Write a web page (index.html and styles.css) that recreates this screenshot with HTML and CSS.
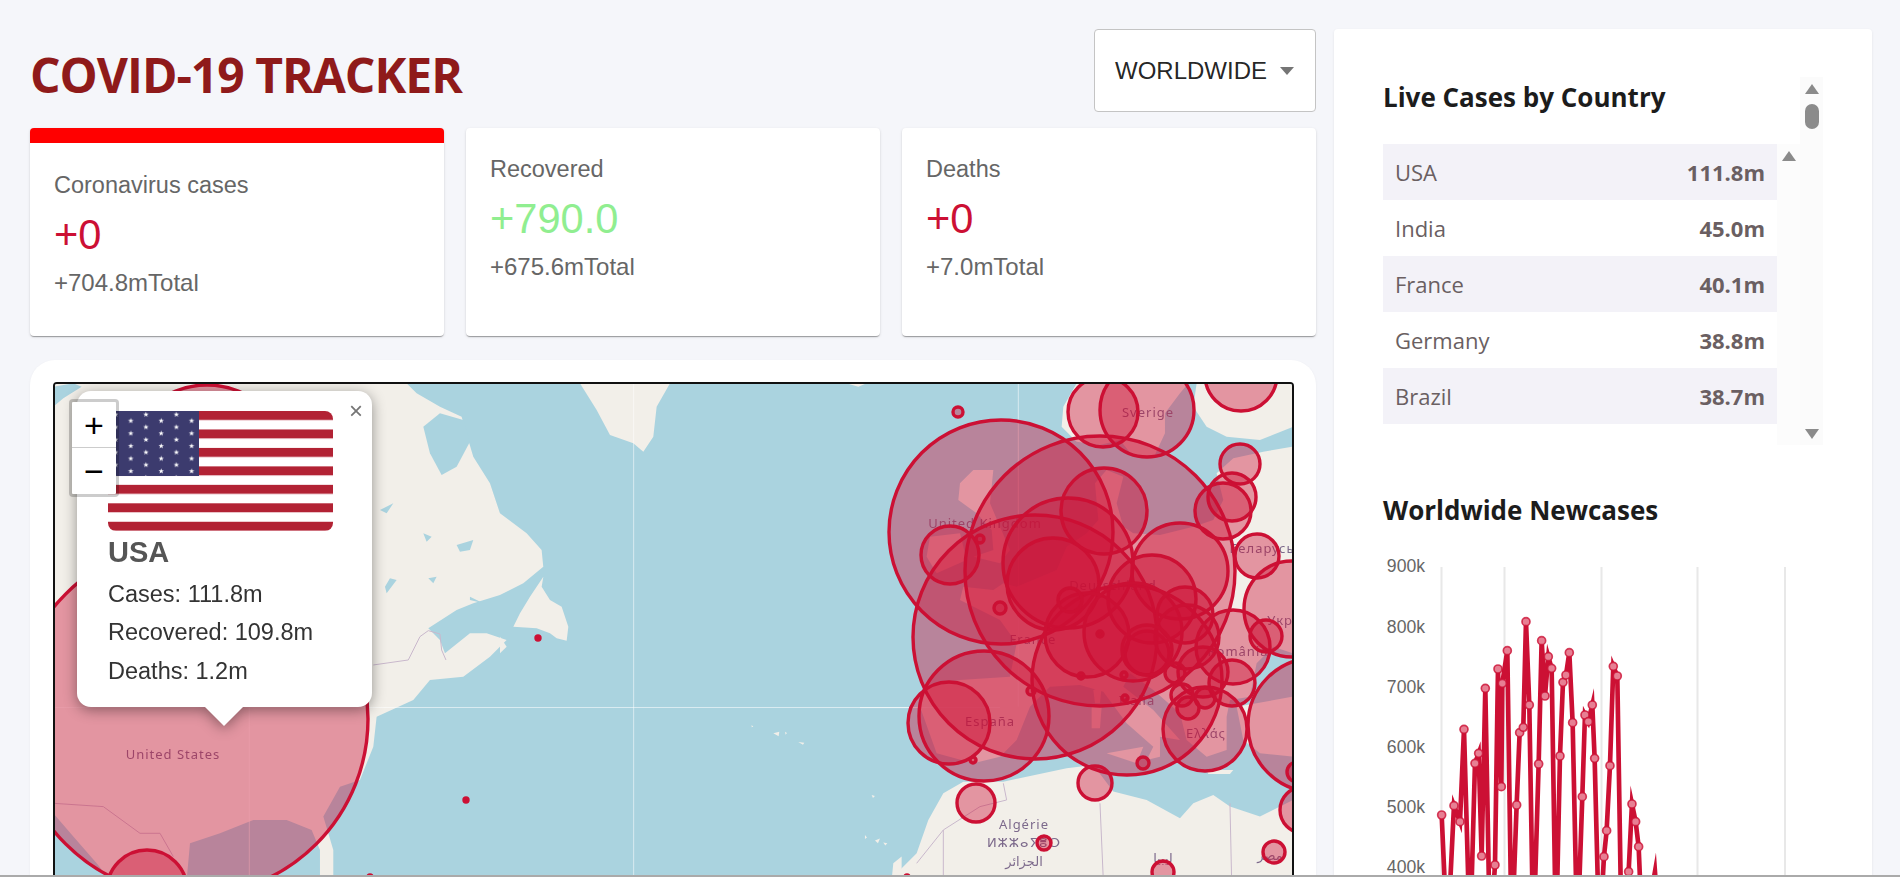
FILE: index.html
```html
<!DOCTYPE html>
<html lang="en">

<head>
    <meta charset="UTF-8" />
    <meta name="viewport" content="width=device-width, initial-scale=1.0" />
    <title>COVID-19 Tracker</title>
    <link rel="stylesheet" href="styles.css">
</head>

<body>
    <div class="app">
        <div class="app-left">
            <div class="app-header">
                <h1 class="app-title">COVID-19 TRACKER</h1>
                <div class="select">
                    <span>WORLDWIDE</span>
                    <i class="select-arrow"></i>
                </div>
            </div>

            <div class="stats">
                <div class="card card-active">
                    <div class="card-label">Coronavirus cases</div>
                    <div class="card-value">+0</div>
                    <div class="card-total">+704.8mTotal</div>
                </div>
                <div class="card">
                    <div class="card-label">Recovered</div>
                    <div class="card-value card-value-green">+790.0</div>
                    <div class="card-total">+675.6mTotal</div>
                </div>
                <div class="card">
                    <div class="card-label">Deaths</div>
                    <div class="card-value">+0</div>
                    <div class="card-total">+7.0mTotal</div>
                </div>
            </div>

            <div class="map-card">
                <div class="map">
                    <svg class="map-tiles" width="1237" height="510" viewBox="55 384 1237 510">
                        <rect class="sea" x="55" y="384" width="1237" height="510" />

                        <!-- north america -->
                        <g transform="translate(40 370) scale(.3333)">
                            <path class="land" d="M0,30 L1090,30 L1130,70 L1200,110 L1265,140 L1285,210 L1300,260 L1350,340 L1380,430 L1460,490 L1505,540 L1510,590 L1450,640 L1380,675 L1300,700 L1250,720 L1165,775 L1200,810 L1215,850 L1290,790 L1340,790 L1400,810 L1350,860 L1270,920 L1170,930 L1120,990 L1010,1040 L1000,1130 L960,1230 L900,1250 L850,1340 L880,1440 L880,1530 L840,1530 L840,1440 L815,1380 L740,1350 L640,1350 L540,1390 L450,1420 L440,1530 L0,1530 Z" />
                            <path class="sea" d="M1150,170 L1170,250 L1205,315 L1250,290 L1290,215 L1270,150 L1200,130 Z" />
                            <path class="sea" d="M40,1330 L100,1400 L170,1480 L210,1530 L40,1530 Z" />
                            <path class="sea" d="M40,110 L70,85 L125,50 L100,40 L40,50 Z" />
                            <path class="sea" d="M1040,670 L1070,630 L1050,625 L1035,650 Z M1165,625 L1190,620 L1180,640 Z M1290,690 L1330,700 L1290,680 Z M1250,525 L1300,510 L1290,540 L1260,545 Z M1150,490 L1175,500 L1160,515 Z M1020,420 L1060,400 L1040,430 Z" />
                            <path class="border" d="M1000,885 L1105,870 L1140,800 L1165,782 L1200,792 L1205,840 L1218,870" />
                            <path class="border" d="M40,1300 L190,1310 L300,1390 L360,1390 L400,1460" />
                            <path class="tile-seam" d="M628,1010 L628,1530" />
                        </g>

                        <!-- greenland, newfoundland, the islands -->
                        <g transform="translate(500 370) scale(.3333)">
                            <path class="land" d="M240,40 L510,40 L470,110 L460,200 L430,245 L400,220 L330,195 L290,120 Z" />
                            <path class="land" d="M130,620 L90,680 L60,730 L40,770 L110,775 L150,790 L170,805 L200,812 L205,770 L185,710 L150,690 L125,650 Z" />
                            <path class="land" d="M0,800 L20,830 L0,850 Z" />
                            <path class="land" d="M1040,40 L1100,40 L1075,50 Z" />
                            <path class="land" d="M755,1065 l5,5 l-5,2 Z M820,1090 l18,-5 l-2,14 Z M855,1085 l6,4 l-4,5 Z M895,1116 l18,2 l-4,6 Z M1115,1275 l10,3 l-6,6 Z M1125,1412 l15,-6 l-6,14 Z M1150,1418 l12,2 l-6,7 Z M1095,1395 l6,8 l-6,4 Z M1175,1530 l5,-50 l25,-20 l0,70 Z" />
                            <path class="tile-seam" d="M401,40 L401,1530" />
                        </g>

                        <!-- europe and north africa -->
                        <g transform="translate(860 370) scale(.3333)">
                            <path class="land" d="M90,1530 L170,1450 L205,1350 L250,1270 L310,1235 L430,1235 L620,1195 L700,1185 L760,1265 L860,1290 L960,1345 L1000,1300 L1060,1275 L1110,1310 L1200,1340 L1300,1290 L1300,1530 Z" />
                            <path class="land" d="M1300,230 L1210,245 L1120,265 L1070,310 L1090,390 L1060,450 L1000,470 L900,495 L820,490 L790,470 L770,400 L790,320 L740,300 L705,340 L715,450 L680,490 L620,530 L590,600 L470,650 L430,640 L400,660 L310,650 L300,690 L420,750 L470,820 L450,920 L300,930 L190,950 L180,1010 L230,1150 L340,1180 L420,1160 L470,1110 L510,1010 L570,950 L660,945 L730,965 L800,1060 L880,1130 L860,1170 L900,1160 L900,1100 L960,1110 L880,1020 L790,950 L810,910 L880,960 L960,1030 L980,1110 L1040,1160 L1100,1140 L1100,1040 L1110,990 L1170,980 L1190,880 L1240,830 L1300,850 Z" />
                            <path class="land" d="M1130,1010 L1300,980 L1300,1160 L1200,1150 L1150,1110 Z" />
                            <path class="land" d="M650,40 L610,110 L605,170 L650,215 L720,225 L780,210 L820,260 L880,265 L915,190 L915,130 L960,70 L985,40 Z" />
                            <path class="land" d="M1010,40 L1300,40 L1300,170 L1200,210 L1100,200 L1040,170 L1000,110 Z" />
                            <path class="land" d="M340,300 L300,340 L295,390 L350,430 L395,480 L400,540 L340,560 L420,580 L450,540 L420,470 L390,400 L400,300 Z" />
                            <path class="land" d="M210,500 L300,490 L320,570 L230,610 L200,560 Z" />
                            <path class="land" d="M695,1010 L725,1010 L720,1075 L695,1075 Z M740,1150 L850,1130 L830,1180 Z M1040,1200 L1120,1200 L1110,1212 L1045,1212 Z M700,960 L725,950 L720,1000 L705,1000 Z" />
                            <path class="border" d="M1110,1300 L1115,1530 M720,1300 L730,1530 M250,1380 L250,1530 M430,1240 L440,1290 L360,1310 L250,1380 L170,1480" />
                            <path class="tile-seam" d="M475,40 L475,1010 M0,1013 L200,1013" />
                        </g>
                        <path class="tile-seam" d="M55,707.5 L1000,707.5" />

                        <!-- place names, drawn under the bubbles -->
                        <g class="place-names">
                            <text x="173" y="759">United States</text>
                            <text x="1148" y="417">Sverige</text>
                            <text x="985" y="528">United Kingdom</text>
                            <text x="1033" y="644">France</text>
                            <text x="1113" y="590">Deutschland</text>
                            <text x="990" y="726">España</text>
                            <text x="1137" y="705">Italia</text>
                            <text x="1206" y="738">Ελλάς</text>
                            <text x="1238" y="656">România</text>
                            <text x="1262" y="553">Беларусь</text>
                            <text x="1295" y="625">Україна</text>
                            <text x="1024" y="829">Algérie</text>
                            <text x="1024" y="847">ⵍⵣⵣⴰⵢⴻⵔ</text>
                            <text x="1024" y="866">الجزائر</text>
                            <text x="1163" y="863">ليبيا</text>
                            <text x="1270" y="860">مصر</text>
                        </g>

                        <g class="bubbles">
                            <circle cx="207" cy="470" r="85" />
                            <circle cx="191" cy="719" r="177" />
                            <circle cx="147" cy="890" r="40" />
                            <circle class="dot" cx="466" cy="800" r="2" />
                            <circle class="dot" cx="538" cy="638" r="2" />
                            <circle class="dot" cx="370" cy="877" r="2" />
                            <circle cx="1001" cy="532" r="112" />
                            <circle cx="1100" cy="571" r="135" />
                            <circle cx="1035" cy="637" r="122" />
                            <circle cx="1127" cy="680" r="95" />
                            <circle cx="984" cy="716" r="65" />
                            <circle cx="949" cy="723" r="41" />
                            <circle cx="950" cy="555" r="29" />
                            <circle cx="1068" cy="563" r="65" />
                            <circle cx="1053" cy="584" r="46" />
                            <circle cx="1104" cy="511" r="43" />
                            <circle cx="1180" cy="571" r="48" />
                            <circle cx="1152" cy="599" r="44" />
                            <circle cx="1087" cy="635" r="42" />
                            <circle cx="1133" cy="632" r="49" />
                            <circle cx="1185" cy="615" r="28" />
                            <circle cx="1187" cy="637" r="32" />
                            <circle cx="1147" cy="653" r="22" />
                            <circle cx="1147" cy="650" r="25" />
                            <circle cx="1233" cy="647" r="37" />
                            <circle cx="1205" cy="729" r="42" />
                            <circle cx="1232" cy="683" r="23" />
                            <circle cx="1203" cy="672" r="25" />
                            <circle cx="1188" cy="708" r="11" />
                            <circle cx="1205" cy="698" r="10" />
                            <circle cx="1182" cy="695" r="11" />
                            <circle cx="1175" cy="673" r="10" />
                            <circle cx="1147" cy="410" r="47" />
                            <circle cx="1103" cy="412" r="35" />
                            <circle cx="1241" cy="375" r="36" />
                            <circle cx="1240" cy="464" r="20" />
                            <circle cx="1232" cy="497" r="24" />
                            <circle cx="1223" cy="511" r="28" />
                            <circle cx="1257" cy="556" r="22" />
                            <circle cx="1292" cy="609" r="48" />
                            <circle cx="1266" cy="636" r="16" />
                            <circle cx="1315" cy="725" r="67" />
                            <circle cx="1297" cy="772" r="10" />
                            <circle cx="1303" cy="810" r="23" />
                            <circle cx="958" cy="412" r="5" />
                            <circle cx="1000" cy="608" r="6" />
                            <circle cx="980" cy="539" r="4" />
                            <circle cx="1031" cy="691" r="4" />
                            <circle cx="973" cy="760" r="3" />
                            <circle class="dot" cx="1100" cy="634" r="3" />
                            <circle cx="1081" cy="676" r="3" />
                            <circle cx="1124" cy="675" r="3" />
                            <circle cx="1125" cy="698" r="3" />
                            <circle cx="1070" cy="600" r="12" />
                            <circle cx="1143" cy="763" r="6" />
                            <circle cx="1095" cy="783" r="17" />
                            <circle cx="976" cy="803" r="19" />
                            <circle cx="1044" cy="843" r="7" />
                            <circle cx="1163" cy="872" r="11" />
                            <circle cx="1274" cy="852" r="11" />
                            <circle class="dot" cx="907" cy="877" r="2" />
                        </g>
                    </svg>

                    <div class="zoom-control">
                        <div class="zoom-btn">+</div>
                        <div class="zoom-btn">−</div>
                    </div>

                    <div class="popup">
                        <span class="popup-close">×</span>
                        <svg class="popup-flag" width="225" height="120" viewBox="0 0 225 120">
                            <defs>
                                <polygon id="star" points="0,-2.8 .7,-.9 2.7,-.9 1.1,.3 1.7,2.3 0,1.1 -1.7,2.3 -1.1,.3 -2.7,-.9 -.7,-.9" />
                                <pattern id="stars" x="0" y="0" width="30.4" height="12.6" patternUnits="userSpaceOnUse">
                                    <use href="#star" x="7.6" y="3.6" fill="#fff" />
                                    <use href="#star" x="22.8" y="9.9" fill="#fff" />
                                </pattern>
                                <pattern id="stripes" x="0" y="0" width="225" height="18.46" patternUnits="userSpaceOnUse">
                                    <rect width="225" height="9.23" fill="#b22234" />
                                    <rect y="9.23" width="225" height="9.23" fill="#fff" />
                                </pattern>
                            </defs>
                            <rect width="225" height="120" fill="url(#stripes)" />
                            <rect width="91" height="65" fill="#3c3b6e" />
                            <rect width="91" height="65" fill="url(#stars)" />
                        </svg>
                        <div class="popup-name">USA</div>
                        <div class="popup-line">Cases: 111.8m</div>
                        <div class="popup-line">Recovered: 109.8m</div>
                        <div class="popup-line">Deaths: 1.2m</div>
                    </div>
                </div>
            </div>
        </div>

        <div class="app-right">
            <div class="live">
                <div class="live-main">
                    <h3 class="side-title live-title">Live Cases by Country</h3>
                    <div class="live-list">
                        <table class="table">
                            <tr><td>USA</td><td><strong>111.8m</strong></td></tr>
                            <tr><td>India</td><td><strong>45.0m</strong></td></tr>
                            <tr><td>France</td><td><strong>40.1m</strong></td></tr>
                            <tr><td>Germany</td><td><strong>38.8m</strong></td></tr>
                            <tr><td>Brazil</td><td><strong>38.7m</strong></td></tr>
                        </table>
                        <div class="scrollbar scrollbar-inner">
                            <i class="arrow-up"></i>
                        </div>
                    </div>
                </div>
                <div class="scrollbar">
                    <i class="arrow-up"></i>
                    <i class="scroll-thumb"></i>
                    <i class="arrow-down"></i>
                </div>
            </div>

            <h3 class="side-title chart-title">Worldwide Newcases</h3>
            <svg class="chart" width="440" height="340" viewBox="1383 560 440 340">
                <g class="chart-grid">
                    <line x1="1441.5" y1="572" x2="1441.5" y2="900" />
                    <line x1="1504.5" y1="572" x2="1504.5" y2="900" />
                    <line x1="1601.5" y1="572" x2="1601.5" y2="900" />
                    <line x1="1697.5" y1="572" x2="1697.5" y2="900" />
                    <line x1="1785" y1="572" x2="1785" y2="900" />
                </g>
                <g class="chart-ticks">
                    <text x="1425" y="577">900k</text>
                    <text x="1425" y="638">800k</text>
                    <text x="1425" y="698">700k</text>
                    <text x="1425" y="758">600k</text>
                    <text x="1425" y="818">500k</text>
                    <text x="1425" y="878">400k</text>
                </g>
                <g transform="translate(1340 480) scale(.3333)">
                    <polyline class="chart-line" points="305,1020 322,1400 342,992 360,1040 372,763 390,1400 405,865 416,835 425,1143 436,640 450,1400 465,1170 474,582 484,935 487,625 502,527 515,1400 530,990 539,773 550,757 558,440 568,690 580,1400 596,867 605,497 615,663 625,545 635,580 648,1400 660,843 669,622 678,600 688,533 698,743 712,1400 727,965 735,720 745,740 757,690 764,850 778,1400 792,1145 800,1067 810,872 820,574 832,603 845,1400 866,1190 876,987 887,1040 896,1115 908,1400 945,1190 960,1400" />
                    <g class="chart-points">
                        <circle cx="305" cy="1020" r="12" />
                        <circle cx="342" cy="992" r="12" />
                        <circle cx="360" cy="1040" r="12" />
                        <circle cx="372" cy="763" r="12" />
                        <circle cx="405" cy="865" r="12" />
                        <circle cx="416" cy="835" r="12" />
                        <circle cx="425" cy="1143" r="12" />
                        <circle cx="436" cy="640" r="12" />
                        <circle cx="465" cy="1170" r="12" />
                        <circle cx="474" cy="582" r="12" />
                        <circle cx="484" cy="935" r="12" />
                        <circle cx="487" cy="625" r="12" />
                        <circle cx="502" cy="527" r="12" />
                        <circle cx="530" cy="990" r="12" />
                        <circle cx="539" cy="773" r="12" />
                        <circle cx="550" cy="757" r="12" />
                        <circle cx="558" cy="440" r="12" />
                        <circle cx="568" cy="690" r="12" />
                        <circle cx="596" cy="867" r="12" />
                        <circle cx="605" cy="497" r="12" />
                        <circle cx="615" cy="663" r="12" />
                        <circle cx="625" cy="545" r="12" />
                        <circle cx="635" cy="580" r="12" />
                        <circle cx="660" cy="843" r="12" />
                        <circle cx="669" cy="622" r="12" />
                        <circle cx="678" cy="600" r="12" />
                        <circle cx="688" cy="533" r="12" />
                        <circle cx="698" cy="743" r="12" />
                        <circle cx="727" cy="965" r="12" />
                        <circle cx="735" cy="720" r="12" />
                        <circle cx="745" cy="740" r="12" />
                        <circle cx="757" cy="690" r="12" />
                        <circle cx="764" cy="850" r="12" />
                        <circle cx="792" cy="1145" r="12" />
                        <circle cx="800" cy="1067" r="12" />
                        <circle cx="810" cy="872" r="12" />
                        <circle cx="820" cy="574" r="12" />
                        <circle cx="832" cy="603" r="12" />
                        <circle cx="866" cy="1190" r="12" />
                        <circle cx="876" cy="987" r="12" />
                        <circle cx="887" cy="1040" r="12" />
                        <circle cx="896" cy="1115" r="12" />
                    </g>
                </g>
            </svg>
        </div>
    </div>
    <div class="window-edge"></div>
</body>

</html>
```

FILE: styles.css
```css
* {
    margin: 0;
    padding: 0;
    box-sizing: border-box;
}

html,
body {
    height: 100%;
    overflow: hidden;
}

body {
    background-color: #f5f6fa;
    font-family: "Liberation Sans", Arial, sans-serif;
}

.app {
    display: flex;
    gap: 18px;
    padding: 29px 28px 0 30px;
}

.app-left {
    width: 1286px;
    flex-shrink: 0;
}

.app-right {
    flex: 1;
    height: 900px;
    padding: 48px 0 0 49px;
    background-color: #fff;
    border-radius: 4px;
    box-shadow: 0 1px 3px rgba(0, 0, 0, 0.08);
}

/* header */
.app-header {
    display: flex;
    justify-content: space-between;
    align-items: center;
    height: 83px;
    margin-bottom: 16px;
}

.app-title {
    font-family: "Open Sans", sans-serif;
    font-size: 48px;
    font-weight: 700;
    letter-spacing: -1px;
    color: #8f1a1a;
    margin-top: 7px;
}

.select {
    display: flex;
    align-items: center;
    justify-content: space-between;
    width: 222px;
    height: 83px;
    padding: 0 21px 0 20px;
    font-size: 24px;
    color: rgba(0, 0, 0, 0.87);
    background-color: #fff;
    border: 1px solid #c4c4c4;
    border-radius: 4px;
}

.select-arrow {
    border-top: 8px solid #757575;
    border-left: 7px solid transparent;
    border-right: 7px solid transparent;
}

/* stat cards */
.stats {
    display: flex;
    gap: 22px;
    margin-bottom: 24px;
}

.card {
    flex: 1;
    height: 208px;
    padding: 27px 24px 0;
    background-color: #fff;
    border-radius: 4px;
    box-shadow: 0 2px 1px -1px rgba(0, 0, 0, 0.2), 0 1px 1px 0 rgba(0, 0, 0, 0.14), 0 1px 3px 0 rgba(0, 0, 0, 0.12);
}

.card-active {
    border-top: 15px solid #f00;
    padding-top: 28px;
}

.card-label {
    font-size: 23.5px;
    line-height: 28px;
    color: #666;
}

.card-value {
    font-size: 41.6px;
    line-height: 49px;
    margin: 11px 0 10px;
    color: #cc1034;
}

.card-value-green {
    color: #90ee90;
}

.card-total {
    font-size: 24px;
    line-height: 28px;
    color: #666;
}

/* map */
.map-card {
    height: 600px;
    padding: 22px 22px 0 23px;
    background-color: #fff;
    border-radius: 25px;
    box-shadow: 0 1px 3px rgba(0, 0, 0, 0.05);
}

.map {
    position: relative;
    height: 530px;
    overflow: hidden;
    border: 2px solid #111;
    border-radius: 4px;
}

.map-tiles {
    display: block;
}

.sea {
    fill: #aad3df;
}

.land {
    fill: #f2efe9;
}

.border {
    fill: none;
    stroke: #c9b8cc;
    stroke-width: 3;
}

.tile-seam {
    fill: none;
    stroke: #fff;
    stroke-opacity: 0.55;
    stroke-width: 3;
}

path.tile-seam[d^="M55"] {
    stroke-width: 1;
}

.place-names {
    font-family: "Noto Sans", "DejaVu Sans", sans-serif;
    font-size: 13px;
    letter-spacing: 1px;
    text-anchor: middle;
    fill: #7d6a8c;
    filter: blur(0.3px);
}

.bubbles circle {
    fill: #cc1034;
    fill-opacity: 0.4;
    stroke: #cc1034;
    stroke-width: 3.4;
}

.bubbles .dot {
    fill-opacity: 1;
}

.zoom-control {
    position: absolute;
    left: 14px;
    top: 15px;
    width: 50px;
    background-color: #fff;
    border: 3px solid rgba(0, 0, 0, 0.2);
    border-radius: 4px;
    background-clip: padding-box;
    z-index: 2;
}

.zoom-btn {
    height: 46px;
    font-size: 34px;
    line-height: 46px;
    text-align: center;
    color: #000;
}

.zoom-btn:first-child {
    border-bottom: 1px solid #ccc;
}

.popup {
    position: absolute;
    left: 22px;
    top: 7px;
    width: 295px;
    height: 316px;
    padding: 20px 31px;
    background-color: #fff;
    border-radius: 14px;
    color: #333;
    filter: drop-shadow(0 3px 7px rgba(0, 0, 0, 0.4));
    z-index: 1;
}

.popup::after {
    content: "";
    position: absolute;
    left: 128px;
    bottom: -19px;
    border-top: 19px solid #fff;
    border-left: 19px solid transparent;
    border-right: 19px solid transparent;
}

.popup-close {
    position: absolute;
    right: 9px;
    top: 7px;
    font-size: 24px;
    line-height: 26px;
    color: #757575;
}

.popup-flag {
    display: block;
    border-radius: 8px;
}

.popup-name {
    font-size: 29px;
    font-weight: 700;
    line-height: 34px;
    margin-top: 4px;
    color: #555;
}

.popup-line {
    font-size: 23.5px;
    line-height: 28px;
    margin-top: 10.5px;
}

/* sidebar */
.side-title {
    font-family: "Open Sans", sans-serif;
    font-size: 26px;
    font-weight: 700;
    color: #1c1c1c;
}

.live {
    display: flex;
    width: 440px;
    height: 368px;
}

.live-main {
    width: 417px;
}

.live-title {
    height: 67px;
    line-height: 40px;
}

.live-list {
    display: flex;
    height: 301px;
}

.table {
    width: 394px;
    height: 280px;
    border-collapse: collapse;
    font-family: "Open Sans", sans-serif;
    font-size: 22px;
    color: #6a5f62;
}

.table tr {
    height: 56px;
}

.table tr:nth-of-type(odd) {
    background-color: #f3f2f8;
}

.table td {
    padding: 0 12px;
}

.table td:last-child {
    text-align: right;
}

.scrollbar {
    position: relative;
    display: flex;
    flex-direction: column;
    align-items: center;
    width: 23px;
    background-color: #fbfbfb;
}

.scrollbar-inner {
    background-color: #fcfcfc;
}

.arrow-up {
    margin-top: 7px;
    border-bottom: 10px solid #8b8b8b;
    border-left: 7px solid transparent;
    border-right: 7px solid transparent;
}

.arrow-down {
    position: absolute;
    bottom: 6px;
    border-top: 10px solid #8b8b8b;
    border-left: 7px solid transparent;
    border-right: 7px solid transparent;
}

.scroll-thumb {
    width: 14px;
    height: 25px;
    margin-top: 10px;
    background-color: #8b8b8b;
    border-radius: 7px;
}

.chart-title {
    margin-top: 45px;
    line-height: 40px;
}

.chart {
    display: block;
    margin-top: 25px;
}

.chart-grid line {
    stroke: #e8e8e8;
    stroke-width: 2;
}

.chart-ticks {
    font-size: 17.6px;
    text-anchor: end;
    fill: #666;
}

.chart-line {
    fill: none;
    stroke: #cc1034;
    stroke-width: 14;
    stroke-miterlimit: 10;
}

.chart-points circle {
    fill: #e77f93;
    stroke: #cc1034;
    stroke-opacity: 0.8;
    stroke-width: 5;
}

.window-edge {
    position: fixed;
    left: 0;
    right: 0;
    bottom: 0;
    height: 2px;
    background-color: #aaa;
    z-index: 5;
}
```
